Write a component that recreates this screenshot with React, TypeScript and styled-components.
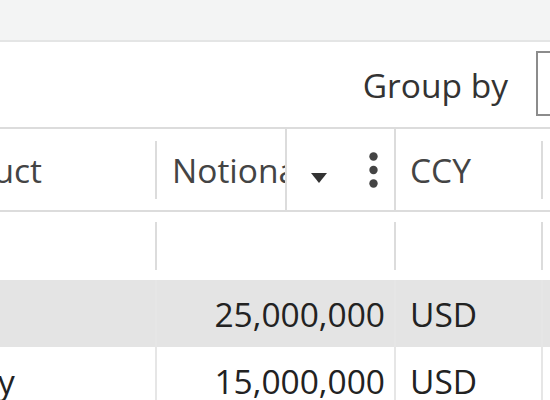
import React from "react";
import styled, { createGlobalStyle } from "styled-components";

const GlobalStyle = createGlobalStyle`
  html, body {
    margin: 0;
    padding: 0;
    overflow: hidden;
    background: #ffffff;
  }
  body {
    font-family: "Open Sans", "Noto Sans", sans-serif;
  }
`;

const LINE = "#dcdcdc";
const FONT = 33.5;

const Page = styled.div`
  width: 760px;
  display: flex;
  flex-direction: column;
`;

const TopBand = styled.div`
  height: 40px;
  background: #f3f4f4;
  border-bottom: 2px solid #e4e5e5;
`;

const Toolbar = styled.div`
  height: 85px;
  display: flex;
  align-items: center;
  justify-content: flex-end;
  gap: 28px;
`;

const ToolbarLabel = styled.span`
  font-size: ${FONT}px;
  color: #333333;
`;

const SelectBox = styled.div`
  width: 224px;
  height: 65px;
  box-sizing: border-box;
  border: 2px solid #8c8c8c;
  background: #ffffff;
  margin-top: -2px;
`;

const Grid = styled.div`
  margin-left: -96px;
  display: flex;
  flex-direction: column;
`;

const Row = styled.div<{ $h: number; $bg?: string; $top?: boolean; $bottom?: boolean }>`
  display: flex;
  height: ${(p) => p.$h}px;
  background: ${(p) => p.$bg || "#ffffff"};
  border-top: ${(p) => (p.$top ? `2px solid ${LINE}` : "none")};
  border-bottom: ${(p) => (p.$bottom ? `2px solid ${LINE}` : "none")};
`;

const HeaderCell = styled.div<{ $w: number; $pad?: number }>`
  width: ${(p) => p.$w}px;
  flex: none;
  box-sizing: border-box;
  padding-left: ${(p) => p.$pad ?? 15}px;
  display: flex;
  align-items: center;
  overflow: hidden;
  white-space: nowrap;
  font-size: ${FONT}px;
  color: #444444;
`;

const Sep = styled.div<{ $h: number }>`
  width: 2px;
  flex: none;
  height: ${(p) => p.$h}px;
  align-self: center;
  background: ${LINE};
`;

const IconBox = styled.div`
  width: 111px;
  flex: none;
  box-sizing: border-box;
  border-left: 2px solid ${LINE};
  border-right: 2px solid ${LINE};
  display: flex;
  align-items: center;
  padding-left: 24px;
  gap: 42px;
`;

const FilterCell = styled.div<{ $w: number }>`
  width: ${(p) => p.$w}px;
  flex: none;
`;

const DataCell = styled.div<{ $w: number; $right?: boolean }>`
  width: ${(p) => p.$w}px;
  flex: none;
  box-sizing: border-box;
  border-right: 2px solid #e6e6e6;
  display: flex;
  align-items: center;
  justify-content: ${(p) => (p.$right ? "flex-end" : "flex-start")};
  padding: ${(p) => (p.$right ? "0 9px 0 0" : "0 0 0 14px")};
  overflow: hidden;
  white-space: nowrap;
  font-size: ${FONT}px;
  color: #222222;
`;

const SortArrow = () => (
  <svg width="16" height="10" viewBox="0 0 16 10" style={{ marginTop: 16 }}>
    <path d="M0 0 L16 0 L8 10 Z" fill="#333" />
  </svg>
);

const MenuDots = () => (
  <svg width="9" height="36" viewBox="0 0 9 36">
    <circle cx="4.5" cy="4.5" r="4.2" fill="#444" />
    <circle cx="4.5" cy="18" r="4.2" fill="#444" />
    <circle cx="4.5" cy="31.5" r="4.2" fill="#444" />
  </svg>
);

const rows = [
  { product: "IRS", notional: "25,000,000", ccy: "USD", bg: "#e4e4e4" },
  { product: "Equity", notional: "15,000,000", ccy: "USD", bg: "#ffffff" },
];

const App = () => {
  return (
    <React.Fragment>
      <GlobalStyle />
      <Page>
        <TopBand />
        <Toolbar>
          <ToolbarLabel>Group by</ToolbarLabel>
          <SelectBox />
        </Toolbar>
        <Grid>
          {/* header */}
          <Row $h={81} $top $bottom>
            <HeaderCell $w={251}>Product</HeaderCell>
            <Sep $h={58} />
            <HeaderCell $w={128}>Notional</HeaderCell>
            <IconBox>
              <SortArrow />
              <MenuDots />
            </IconBox>
            <HeaderCell $w={145} $pad={14}>CCY</HeaderCell>
            <Sep $h={58} />
            <HeaderCell $w={200} />
          </Row>
          {/* filter row */}
          <Row $h={68}>
            <FilterCell $w={251} />
            <Sep $h={48} />
            <FilterCell $w={237} />
            <Sep $h={48} />
            <FilterCell $w={145} />
            <Sep $h={48} />
            <FilterCell $w={200} />
          </Row>
          {rows.map((r) => (
            <Row key={r.product} $h={67} $bg={r.bg}>
              <DataCell $w={253}>{r.product}</DataCell>
              <DataCell $w={239} $right>{r.notional}</DataCell>
              <DataCell $w={147}>{r.ccy}</DataCell>
              <DataCell $w={200} />
            </Row>
          ))}
        </Grid>
      </Page>
    </React.Fragment>
  );
};

export default App;
